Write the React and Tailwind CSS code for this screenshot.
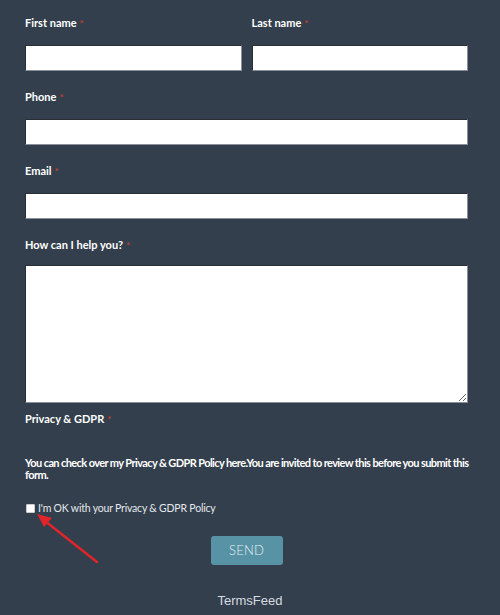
import React from 'react'

const labelCls = 'block text-[11px] leading-[14px] font-bold text-white'
const inputCls = 'block w-full h-[26px] bg-white border border-[#2a2f36] border-b-[#8a9099] border-r-[#8a9099] outline-none'

function Req() {
  return <span className="text-[#b8413a] text-[10px] ml-[3px]">*</span>
}

export default function App() {
  return (
    <div className="w-[500px] h-[615px] bg-[#333f4c] overflow-hidden relative" style={{ fontFamily: 'Lato, "Noto Sans", sans-serif' }}>
      <form className="pl-[25px] pr-[32px] pt-[16px]" onSubmit={(e) => e.preventDefault()}>
        <div className="flex gap-[10px]">
          <div className="flex-1">
            <label className={labelCls}>First name<Req /></label>
            <input type="text" className={`${inputCls} mt-[15px]`} />
          </div>
          <div className="flex-1">
            <label className={labelCls}>Last name<Req /></label>
            <input type="text" className={`${inputCls} mt-[15px]`} />
          </div>
        </div>

        <div className="mt-[19px]">
          <label className={labelCls}>Phone<Req /></label>
          <input type="text" className={`${inputCls} mt-[15px]`} />
        </div>

        <div className="mt-[19px]">
          <label className={labelCls}>Email<Req /></label>
          <input type="email" className={`${inputCls} mt-[15px]`} />
        </div>

        <div className="mt-[19px]">
          <label className={labelCls}>How can I help you?<Req /></label>
          <textarea className="block w-full h-[138px] mt-[13px] bg-white border border-[#2a2f36] border-b-[#8a9099] border-r-[#8a9099] outline-none resize-y" />
        </div>

        <div className="mt-[9px]">
          <label className={labelCls}>Privacy &amp; GDPR<Req /></label>
        </div>

        <p className="mt-[31px] mr-[-2px] text-[11px] leading-[12px] font-bold text-white tracking-[-0.6px]">
          You can check over my Privacy &amp; GDPR Policy here.You are invited to review this before you submit this form.
        </p>

        <label className="mt-[20px] flex items-center gap-[3px] text-[10.5px] leading-[14px] text-[#e4e8ec] tracking-[-0.2px]">
          <input type="checkbox" className="w-[9px] h-[9px] m-0 ml-[1px] appearance-none bg-white border border-[#ccc] rounded-[1px]" />
          I'm OK with your Privacy &amp; GDPR Policy
        </label>

        <div className="flex justify-center mt-[21px]">
          <button type="submit" className="w-[72px] h-[29px] rounded-[3px] bg-[#5793a4] text-[#e6eef1] text-[13px] font-light tracking-[0.2px]">
            SEND
          </button>
        </div>
      </form>

      <div className="mt-[26px] text-center text-[13px] text-[#d5dbe1]" style={{ fontFamily: '"Liberation Sans", Arial, sans-serif' }}>
        TermsFeed
      </div>

      {/* red pointer arrow toward the checkbox */}
      <svg className="absolute left-0 top-0 pointer-events-none" width="500" height="615">
        <line x1="97" y1="562" x2="45" y2="521" stroke="#e0242a" strokeWidth="2.5" strokeLinecap="round" />
        <polygon points="37,514 52,518 44,527" fill="#e0242a" />
      </svg>
    </div>
  )
}
